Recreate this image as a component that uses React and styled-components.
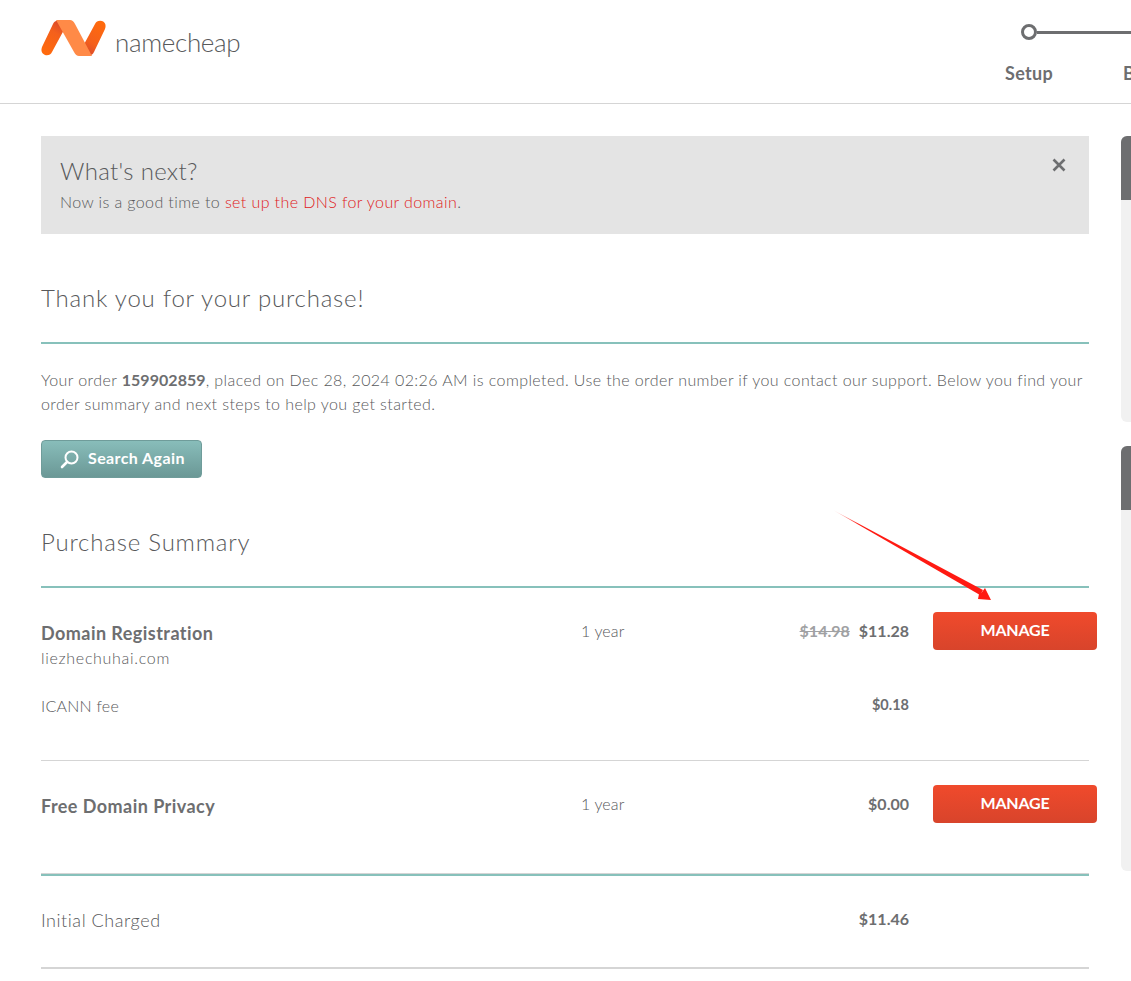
import React from "react";
import styled, { createGlobalStyle } from "styled-components";

const Global = createGlobalStyle`
  html, body { margin: 0; padding: 0; background: #fff; overflow: hidden; }
  body { font-family: Lato, "Liberation Sans", sans-serif; font-weight: 300; color: #58595b; }
`;
const Page = styled.div`width: 1131px; height: 981px; overflow: hidden; position: relative;`;
const Header = styled.header`
  height: 103px; border-bottom: 1px solid #d5d5d5; padding-left: 41px;
  display: flex; justify-content: space-between; overflow: hidden;
`;
const Brand = styled.div`display: flex; align-items: flex-start; padding-top: 20px; gap: 9px;`;
const BrandName = styled.span`
  font-size: 26px; font-weight: 300; letter-spacing: -0.35px; color: #58595b; line-height: 30px; margin-top: 7px;
`;
const Steps = styled.div`display: flex; width: 156px; flex-shrink: 0; margin-right: -30px; padding-top: 24px;`;
const Step = styled.div`display: flex; flex-direction: column; align-items: flex-start;`;
const Track = styled.div`display: flex; align-items: center; height: 16px; margin-left: 16px;`;
const Dot = styled.span`width: 16px; height: 16px; border: 3px solid #6d6e70; border-radius: 50%; box-sizing: border-box; flex-shrink: 0;`;
const Line = styled.span`width: 110px; height: 3px; background: #6d6e70;`;
const StepLabels = styled.div`display: flex; gap: 70px; margin-top: 23px; font-size: 18px; font-weight: 700; letter-spacing: 0.3px; line-height: 20px; color: #6d6e70;`;
const Body = styled.div`display: flex; padding: 32px 0 0 41px; gap: 32px;`;
const Main = styled.main`width: 1048px; flex-shrink: 0;`;
const Notice = styled.div`
  height: 98px; background: #e4e4e4; padding: 19px 19px 0; box-sizing: border-box; position: relative;
`;
const NoticeTitle = styled.div`font-size: 24px; font-weight: 300; letter-spacing: 0.3px; line-height: 32px; color: #58595b;`;
const NoticeText = styled.div`font-size: 16px; line-height: 22px; margin-top: 4px; letter-spacing: 0.4px;`;
const RedLink = styled.span`color: #e0201a;`;
const Close = styled.svg`position: absolute; right: 23px; top: 22px;`;
const Heading = styled.h2`font-size: 24px; font-weight: 300; line-height: 32px; margin: 0; color: #58595b; letter-spacing: 0.8px;`;
const ThanksSection = styled.section`padding-top: 48px;`;
const SummarySection = styled.section`padding-top: 48px;`;
const TealRule = styled.div`height: 2px; background: #87c1bb; margin-top: ${p => p.$top}px;`;
const Para = styled.p`
  font-size: 16px; line-height: 24px; margin: 24px 0 0; letter-spacing: 0.41px;
  b { font-weight: 700; letter-spacing: 0.05px; color: #6d6e70; }
`;
const SearchBtn = styled.button`
  display: flex; align-items: center; gap: 8px; width: 161px; height: 38px; margin-top: 24px; padding: 0 0 0 18px;
  border: 1px solid #6f9c9a; border-radius: 4px; background: linear-gradient(#88bdba, #6b9896);
  color: #fff; font: 700 16px Lato, sans-serif; letter-spacing: 0.4px; box-sizing: border-box;
`;
const BtnLabel = styled.span`margin-top: -3px;`;
const Row = styled.div`
  display: grid; grid-template-columns: 540px 130px 198px 164px; height: ${p => p.$h}px; align-items: start;
  border-bottom: ${p => p.$border ? "1px solid #d5d5d5" : "none"}; box-sizing: border-box; padding-top: ${p => p.$pad}px;
`;
const ItemTitle = styled.div`font-size: 18px; font-weight: 700; line-height: 24px; letter-spacing: 0.45px; color: #6d6e70;`;
const ItemSub = styled.div`font-size: 16px; line-height: 20px; margin-top: 3px; letter-spacing: 0.7px;`;
const Term = styled.div`font-size: 16px; line-height: 22px; margin-top: -1px; letter-spacing: 0.1px;`;
const Plain = styled.div`font-size: 16px; line-height: 22px; letter-spacing: 0.25px;`;
const Large = styled.div`font-size: 18px; line-height: 24px; margin-top: -1px; letter-spacing: 0.55px;`;
const Price = styled.div`
  font-size: ${p => p.$small ? 14.5 : 16}px; font-weight: 700; line-height: 22px; text-align: right; color: #6d6e70;
  margin-top: -1px;
`;
const Old = styled.s`color: #a0a1a3; margin-right: 9px;`;
const Manage = styled.button`
  width: 164px; height: 38px; margin-left: 24px; margin-top: -9px; padding: 0 0 3px; border: 0; border-radius: 4px; color: #fff;
  background: linear-gradient(#f04a2c, #d8442b); font: 700 16px Lato, sans-serif; letter-spacing: -0.2px;
`;
const Side = styled.aside`display: flex; flex-direction: column; gap: 24px; width: 40px; flex-shrink: 0;`;
const Panel = styled.div`
  height: ${p => p.$h}px; background: #f1f1f1; border-radius: 6px 0 0 6px; overflow: hidden;
`;
const PanelTop = styled.div`height: 64px; background: #6d6e70;`;
const GreyRule = styled.div`height: 2px; background: #d5d5d5;`;
const Arrow = styled.svg`position: absolute; left: 830px; top: 508px; pointer-events: none;`;

export default function App() {
  return (
    <Page>
      <Global />
      <Header>
        <Brand>
          <svg width="65" height="36" viewBox="0 0 65 36">
            <defs>
              <linearGradient id="lg1" x1="0.75" y1="0" x2="0.3" y2="1">
                <stop offset="0" stopColor="#d9482b" />
                <stop offset="0.35" stopColor="#f4601c" />
                <stop offset="1" stopColor="#ff6a0d" />
              </linearGradient>
              <linearGradient id="lg2" x1="0.25" y1="1" x2="0.7" y2="0">
                <stop offset="0" stopColor="#d9482b" />
                <stop offset="0.35" stopColor="#f4601c" />
                <stop offset="1" stopColor="#ff6a0d" />
              </linearGradient>
            </defs>
            <path d="M18 1 Q14 0 12 4 L1 27 Q-1 33 4 35 Q9 36 11 32 L24 8 Z" fill="url(#lg1)" />
            <path d="M47 35 Q51 36 53 32 L64 9 Q66 3 61 1 Q56 0 54 4 L41 28 Z" fill="url(#lg2)" />
            <path d="M15 0 L29 0 Q32 0 34 4 L51 36 L38 36 Q35 36 33 32 Z" fill="#ff8a47" />
          </svg>
          <BrandName>namecheap</BrandName>
        </Brand>
        <Steps>
          <Step>
            <Track><Dot /><Line /></Track>
            <StepLabels><span>Setup</span><span>Billing</span></StepLabels>
          </Step>
        </Steps>
      </Header>
      <Body>
        <Main>
          <Notice>
            <NoticeTitle>What's next?</NoticeTitle>
            <NoticeText>Now is a good time to <RedLink>set up the DNS for your domain</RedLink>.</NoticeText>
            <Close width="14" height="14" viewBox="0 0 14 14"><path d="M1.5 1.5 L12.5 12.5 M12.5 1.5 L1.5 12.5" stroke="#6d6e70" strokeWidth="2.6" /></Close>
          </Notice>
          <ThanksSection>
            <Heading>Thank you for your purchase!</Heading>
            <TealRule $top={28} />
            <Para>Your order <b>159902859</b>, placed on Dec 28, 2024 02:26 AM is completed. Use the order number if you contact our support. Below you find your order summary and next steps to help you get started.</Para>
            <SearchBtn>
              <svg width="20" height="20" viewBox="0 0 20 20" fill="none" stroke="#fff" strokeWidth="2"><circle cx="11.5" cy="8.5" r="6" /><path d="M7 13 L2 18" strokeWidth="2.6" strokeLinecap="round" /></svg>
              <BtnLabel>Search Again</BtnLabel>
            </SearchBtn>
          </ThanksSection>
          <SummarySection>
            <Heading>Purchase Summary</Heading>
            <TealRule $top={28} />
            <Row $h={97} $pad={33}>
              <div><ItemTitle>Domain Registration</ItemTitle><ItemSub>liezhechuhai.com</ItemSub></div>
              <Term>1 year</Term>
              <Price><Old>$14.98</Old>$11.28</Price>
              <Manage>MANAGE</Manage>
            </Row>
            <Row $h={76} $border $pad={10}>
              <Plain>ICANN fee</Plain>
              <span />
              <Price $small>$0.18</Price>
            </Row>
            <Row $h={113} $border $pad={33}>
              <ItemTitle>Free Domain Privacy</ItemTitle>
              <Term>1 year</Term>
              <Price>$0.00</Price>
              <Manage>MANAGE</Manage>
            </Row>
            <TealRule $top={0} />
            <Row $h={91} $pad={33}>
              <Large>Initial Charged</Large>
              <span />
              <Price>$11.46</Price>
            </Row>
            <GreyRule />
          </SummarySection>
        </Main>
        <Side>
          <Panel $h={286}><PanelTop /></Panel>
          <Panel $h={425}><PanelTop /></Panel>
        </Side>
      </Body>
      <Arrow width="170" height="100" viewBox="0 0 170 100">
        <defs>
          <linearGradient id="shaft" x1="0" y1="0" x2="1" y2="0.6">
            <stop offset="0" stopColor="#ff1a12" stopOpacity="0.1" />
            <stop offset="0.2" stopColor="#ff1a12" />
          </linearGradient>
        </defs>
        <path d="M3 2 L153 82 L150 87 Z" fill="url(#shaft)" />
        <path d="M161 92 L155 80 L152 84 L149 86 L148 91 Z" fill="#ff1a12" />
      </Arrow>
    </Page>
  );
}
